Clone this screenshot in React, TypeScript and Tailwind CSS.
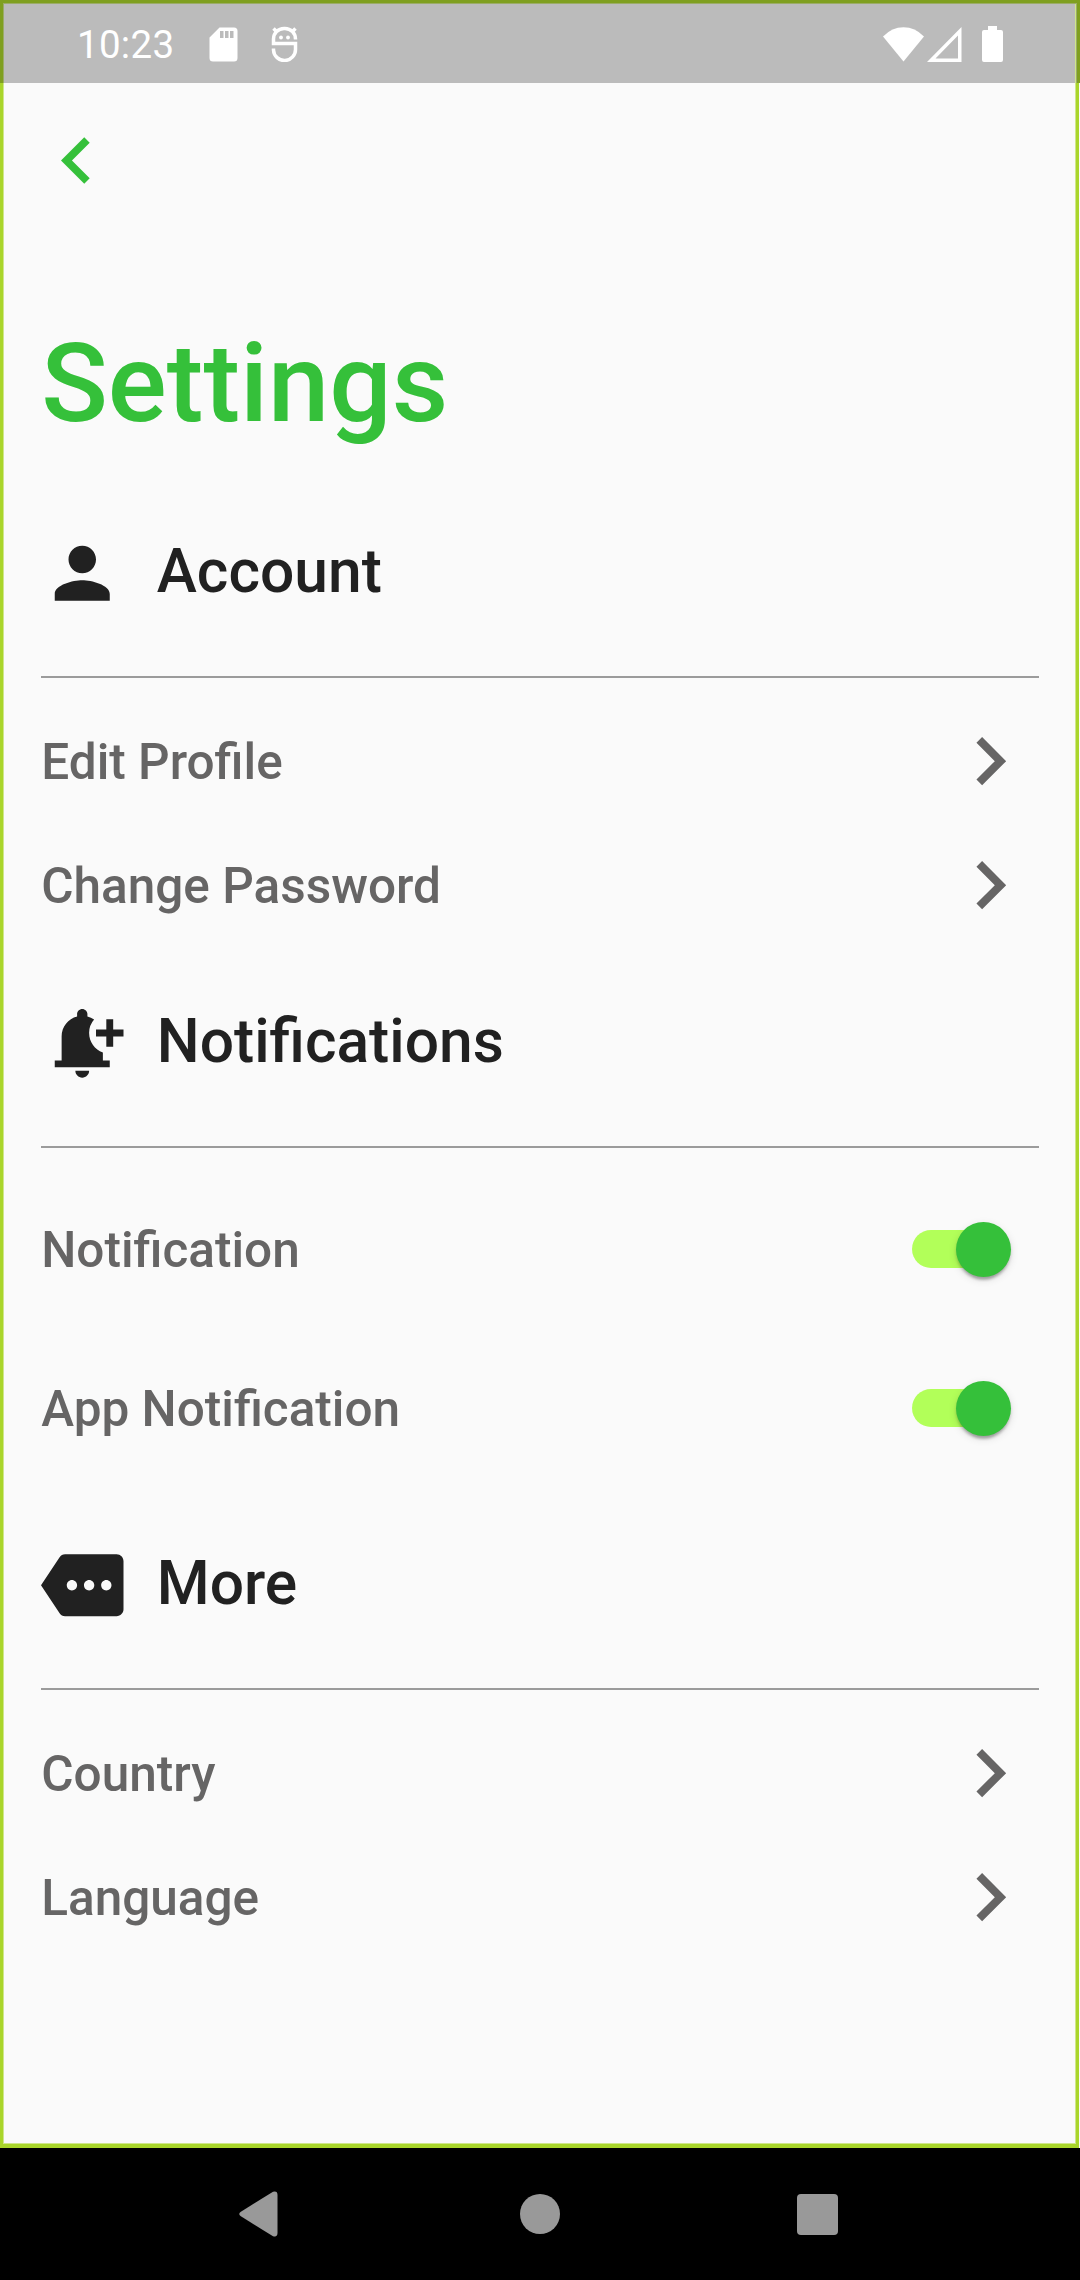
import React from "react";

const Chevron = () => (
  <svg viewBox="0 0 24 24" className="mr-[0.75px] h-[96.25px] w-[96.25px]" fill="#666565">
    <path d="M10 6L8.59 7.41 13.17 12l-4.58 4.59L10 18l6-6z" />
  </svg>
);

const Toggle = () => (
  <div className="mr-[27.75px] flex h-[55px] w-[99px] items-center">
    <div className="h-[38.5px] w-[90.75px] rounded-full bg-[#b2ff59]" />
    <div className="-ml-[46.75px] h-[55px] w-[55px] shrink-0 rounded-full bg-[#35c03a] shadow-[0_5.5px_3px_-3px_rgba(0,0,0,0.2),0_2.75px_3px_rgba(0,0,0,0.14),0_2.75px_8px_rgba(0,0,0,0.12)]" />
  </div>
);

const Section = ({ title, path }: { title: string; path: string }) => (
  <div className="flex h-[82.5px] items-center">
    <svg viewBox="0 0 24 24" className="mr-[33px] h-[82.5px] w-[82.5px]" fill="#212121">
      <path d={path} />
    </svg>
    <h2 className="pb-[2px] text-[60.5px] leading-[71px] font-medium text-[#212121]">{title}</h2>
  </div>
);

const Row = ({ label, children }: { label: string; children: React.ReactNode }) => (
  <div className="flex h-[124px] items-center justify-between">
    <span className="pt-[2px] text-[49.5px] leading-[58px] font-medium text-[#666565]">{label}</span>
    {children}
  </div>
);

const Divider = () => <div className="h-[2px] bg-[#9b9b9b]" />;

const PERSON =
  "M12 12c2.21 0 4-1.79 4-4s-1.79-4-4-4-4 1.79-4 4 1.79 4 4 4zm0 2c-2.67 0-8 1.34-8 4v2h16v-2c0-2.66-5.33-4-8-4z";
const BELL_ADD =
  "M10 20h4c0 1.1-.9 2-2 2s-2-.9-2-2zm4-11c0 2.61 1.67 4.83 4 5.66V17h2v2H4v-2h2v-7c0-2.79 1.91-5.14 4.5-5.8v-.7c0-.83.67-1.5 1.5-1.5s1.5.67 1.5 1.5v.7c.71.18 1.36.49 1.95.9A5.902 5.902 0 0014 9zm10-1h-3V5h-2v3h-3v2h3v3h2v-3h3V8z";
const MORE =
  "M22 3H7c-.69 0-1.23.35-1.59.88L0 12l5.41 8.11c.36.53.9.89 1.59.89h15c1.1 0 2-.9 2-2V5c0-1.1-.9-2-2-2zM9 13.5c-.83 0-1.5-.67-1.5-1.5s.67-1.5 1.5-1.5 1.5.67 1.5 1.5-.67 1.5-1.5 1.5zm5 0c-.83 0-1.5-.67-1.5-1.5s.67-1.5 1.5-1.5 1.5.67 1.5 1.5-.67 1.5-1.5 1.5zm5 0c-.83 0-1.5-.67-1.5-1.5s.67-1.5 1.5-1.5 1.5.67 1.5 1.5-.67 1.5-1.5 1.5z";

const StatusBar = () => (
  <header className="flex h-[83px] items-center bg-[#bbbbbb] pt-[5px] pl-[77px] text-white">
    <span className="w-[132px] pt-[2px] text-[38.5px] leading-[46px] tracking-[0.3px]">10:23</span>
    <svg className="h-[35px] w-[29px]" viewBox="0 0 29 35">
      <path fill="#fff" fillRule="evenodd" d="M10.500 0.500H25a3.500 3.500 0 0 1 3.500 3.500V31a3.500 3.500 0 0 1-3.500 3.500H4A3.500 3.500 0 0 1 .5 31V10.500zM11 4v7h3.500V4zm5 0v7h3.500V4zm5 0v7h3.500V4z" />
    </svg>
    <svg className="ml-[33px] h-[36px] w-[27px]" viewBox="0 0 27 36" fill="none" stroke="#fff" strokeWidth="3.5">
      <path d="M24.500 13.500V13a10.500 10.500 0 0 0-10.500-10.500h-1A10.500 10.500 0 0 0 2.500 13v4.500h22v5.500a11 11 0 0 1-22 1v-1.500M5.500 5.500L2.500 2.500M21.500 5.500L24.500 2.500" />
      <circle cx="10" cy="11.500" r="1.900" fill="#fff" stroke="none" />
      <circle cx="17" cy="11.500" r="1.900" fill="#fff" stroke="none" />
    </svg>
    <svg className="ml-auto h-[35px] w-[41px]" viewBox="0 0 41 35" fill="#fff">
      <path d="M20.500 34.500L0 9.500Q9 .3 20.500.3T41 9.500z" />
    </svg>
    <svg className="ml-[3px] h-[35px] w-[35px]" viewBox="0 0 35 35" fill="#fff" fillRule="evenodd">
      <path d="M34.500 0V35H0zM31 8.500L8.500 31.500H31z" />
    </svg>
    <svg className="mr-[77px] ml-[20px] h-[36px] w-[21px]" viewBox="0 0 21 36" fill="#fff">
      <path d="M6 0h9v4h4a2 2 0 0 1 2 2v28a2 2 0 0 1-2 2H2a2 2 0 0 1-2-2V6a2 2 0 0 1 2-2h4z" />
    </svg>
  </header>
);

export default function App() {
  return (
    <div className="relative flex h-[2280px] w-[1080px] flex-col overflow-hidden bg-[#fafafa] font-['Roboto',sans-serif]">
      <StatusBar />
      <main className="flex h-[2065px] flex-col px-[41.25px]">
        <svg viewBox="0 0 24 24" className="mt-[31px] -ml-[11.25px] h-[93px] w-[93px]" fill="#35c03a">
          <path d="M15.410 7.410L14 6l-6 6 6 6 1.410-1.410L10.830 12z" />
        </svg>
        <h1 className="mt-[111.75px] h-[129px] text-[110px] leading-[129px] font-medium text-[#35c03a]">Settings</h1>
        <div className="mt-[83.75px]">
          <Section title="Account" path={PERSON} />
        </div>
        <div className="mt-[62px]">
          <Divider />
        </div>
        <div className="mt-[21px]">
          <Row label="Edit Profile"><Chevron /></Row>
          <Row label="Change Password"><Chevron /></Row>
        </div>
        <div className="mt-[54.5px]">
          <Section title="Notifications" path={BELL_ADD} />
        </div>
        <div className="mt-[62px]">
          <Divider />
        </div>
        <div className="mt-[39px] flex flex-col gap-[35px]">
          <Row label="Notification"><Toggle /></Row>
          <Row label="App Notification"><Toggle /></Row>
        </div>
        <div className="mt-[73.5px]">
          <Section title="More" path={MORE} />
        </div>
        <div className="mt-[62px]">
          <Divider />
        </div>
        <div className="mt-[21px]">
          <Row label="Country"><Chevron /></Row>
          <Row label="Language"><Chevron /></Row>
        </div>
      </main>
      <nav className="flex h-[132px] items-center bg-black">
        <svg className="ml-[239px] h-[46px] w-[39px]" viewBox="0 0 39 46" fill="#999">
          <path d="M1.500 21L34 .8Q38.500-.5 38.500 4v38q0 4.500-4.500 3.200L1.500 25q-2.500-2 0-4z" />
        </svg>
        <div className="ml-[242px] h-[40px] w-[40px] rounded-full bg-[#999]" />
        <div className="ml-[237px] h-[41px] w-[41px] rounded-[4px] bg-[#999]" />
      </nav>
      <div className="pointer-events-none absolute top-0 left-0 h-[2148px] w-[1079px] border-[3px] border-b-[4px] border-[#a9d52b]">
        <div className="h-full w-full border border-[#cfe68b]" />
      </div>
      <div className="pointer-events-none absolute top-0 left-0 h-[83px] w-full border-x-[3px] border-t-[3px] border-[#7f9f20]">
        <div className="h-full w-full border-x border-t border-[#9bac68]" />
      </div>
    </div>
  );
}
